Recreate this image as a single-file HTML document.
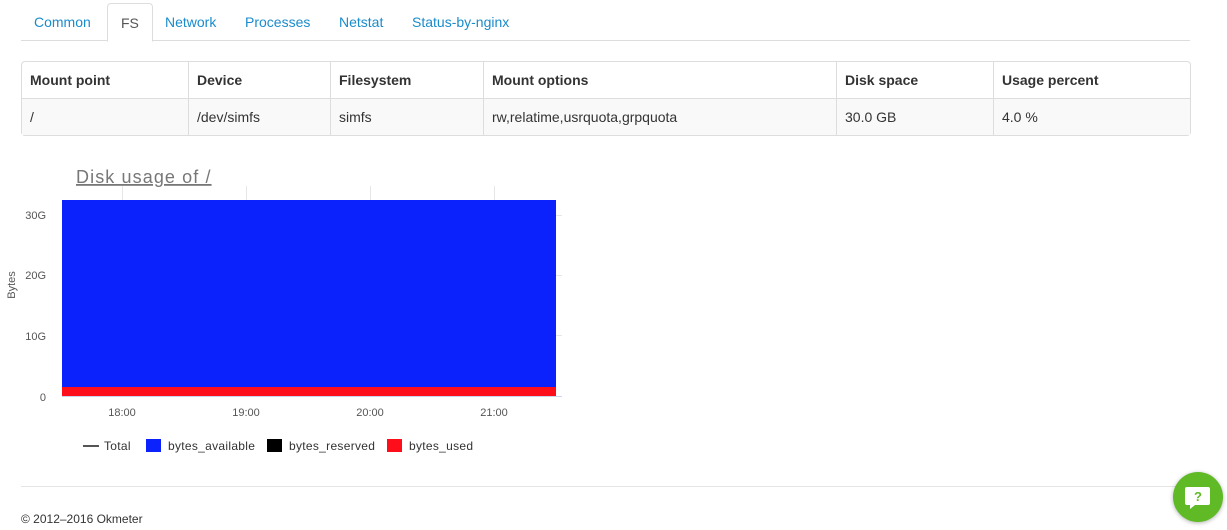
<!DOCTYPE html>
<html><head><style>
body{margin:0;background:#fff;font-family:"Liberation Sans",sans-serif;width:1227px;height:530px;overflow:hidden;position:relative}
.tabs{position:absolute;left:21px;top:0;width:1169px;height:40px;border-bottom:1px solid #ddd}
.tab{position:absolute;top:14px;font-size:14px;color:#1a8ccc}
.tab.active{top:3px;height:37px;border:1px solid #ddd;border-bottom:1px solid #fff;border-radius:4px 4px 0 0;background:#fff;color:#555;padding:0 13px;line-height:38px}
table{position:absolute;left:21px;top:61px;width:1170px;border-collapse:separate;border-spacing:0;border:1px solid #ddd;border-radius:4px;font-size:14px;color:#333}
td,th{border-right:1px solid #ddd;padding:0 8px;text-align:left;height:36px}
th{font-weight:bold;border-bottom:1px solid #ddd}
tr td:last-child,tr th:last-child{border-right:none}
tbody td{background:#f9f9f9}
svg{position:absolute;left:0;top:160px}
.foot{position:absolute;left:21px;top:486px;width:1169px;border-top:1px solid #e5e5e5}
.copy{position:absolute;left:21px;top:512px;font-size:12px;color:#333}
.help{position:absolute;left:1173px;top:472px;width:50px;height:50px;border-radius:50%;background:#5fba26;box-shadow:0 1px 4px rgba(0,0,0,.3)}
</style></head><body>
<div class="tabs">
<span class="tab" style="left:13px">Common</span>
<span class="tab active" style="left:86px">FS</span>
<span class="tab" style="left:144px">Network</span>
<span class="tab" style="left:224px">Processes</span>
<span class="tab" style="left:318px">Netstat</span>
<span class="tab" style="left:391px">Status-by-nginx</span>
</div>
<table>
<thead><tr><th style="width:150px">Mount point</th><th style="width:125px">Device</th><th style="width:136px">Filesystem</th><th style="width:336px">Mount options</th><th style="width:140px">Disk space</th><th>Usage percent</th></tr></thead>
<tbody><tr><td>/</td><td>/dev/simfs</td><td>simfs</td><td>rw,relatime,usrquota,grpquota</td><td>30.0 GB</td><td>4.0 %</td></tr></tbody>
</table>
<svg width="600" height="310" font-family="Liberation Sans, sans-serif">
<text x="76" y="23" font-size="18" fill="#777" text-decoration="underline" letter-spacing="1.1">Disk usage of /</text>
<g stroke="#e6e6e6"><line x1="122.5" y1="26" x2="122.5" y2="236"/><line x1="246.5" y1="26" x2="246.5" y2="236"/><line x1="370.5" y1="26" x2="370.5" y2="236"/><line x1="494.5" y1="26" x2="494.5" y2="236"/>
<line x1="556" y1="55.5" x2="562" y2="55.5"/><line x1="556" y1="115.5" x2="562" y2="115.5"/><line x1="556" y1="175.5" x2="562" y2="175.5"/></g>
<rect x="62" y="40" width="494" height="188" fill="#0c22fc"/>
<rect x="62" y="227" width="494" height="9" fill="#fe0d1a"/>
<line x1="62" y1="236.5" x2="562" y2="236.5" stroke="#ccd6eb"/>
<g font-size="11" fill="#555" text-anchor="end"><text x="46" y="59">30G</text><text x="46" y="119">20G</text><text x="46" y="180">10G</text><text x="46" y="241">0</text></g>
<text transform="translate(15,125) rotate(-90)" font-size="11" fill="#555" text-anchor="middle">Bytes</text>
<g font-size="11" fill="#555" text-anchor="middle"><text x="122" y="256">18:00</text><text x="246" y="256">19:00</text><text x="370" y="256">20:00</text><text x="494" y="256">21:00</text></g>
<g font-size="12" fill="#333" letter-spacing="0.3">
<line x1="83" y1="286" x2="99" y2="286" stroke="#555" stroke-width="2"/><text x="104" y="290">Total</text>
<rect x="146" y="279" width="15" height="13" fill="#0c22fc"/><text x="168" y="290">bytes_available</text>
<rect x="267" y="279" width="15" height="13" fill="#000"/><text x="289" y="290">bytes_reserved</text>
<rect x="387" y="279" width="15" height="13" fill="#fe0d1a"/><text x="409" y="290">bytes_used</text>
</g>
</svg>
<div class="foot"></div>
<div class="copy">© 2012–2016 Okmeter</div>
<div class="help"><svg width="50" height="50" style="left:0;top:0"><path d="M14 15h21a2 2 0 0 1 2 2v14a2 2 0 0 1-2 2h-13l-5 4v-4h-3a2 2 0 0 1-2-2v-14a2 2 0 0 1 2-2z" fill="#fff"/><text x="25" y="29" font-size="13" font-weight="bold" fill="#5fba26" text-anchor="middle">?</text></svg></div>
</body></html>
